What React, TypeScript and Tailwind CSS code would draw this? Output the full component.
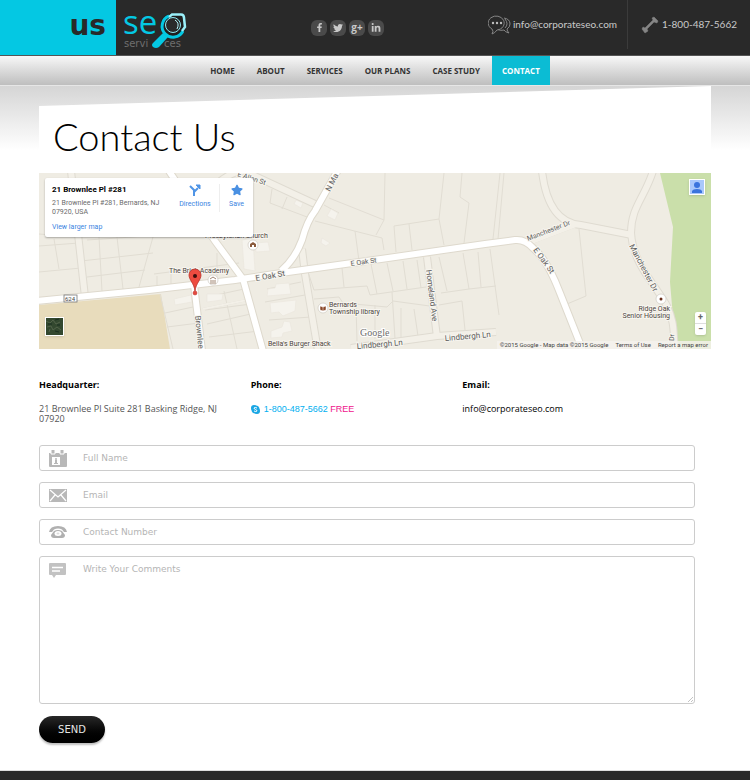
import React from 'react';
import { FaFacebookF, FaLinkedinIn, FaStar, FaTwitter } from 'react-icons/fa';

const navItems = ['HOME', 'ABOUT', 'SERVICES', 'OUR PLANS', 'CASE STUDY', 'CONTACT'];

const streetLabels = [
    { text: 'E Allen St', x: 198, y: 3, angle: 18, size: 7 },
    { text: 'N Ma', x: 291, y: 19, angle: -63, size: 8 },
    { text: 'E Oak St', x: 217, y: 108, angle: -10, size: 8 },
    { text: 'E Oak St', x: 312, y: 93, angle: -8, size: 7 },
    { text: 'E Oak St', x: 494, y: 77, angle: 54, size: 8 },
    { text: 'Homeland Ave', x: 387, y: 97, angle: 83, size: 8 },
    { text: 'Brownlee', x: 156, y: 143, angle: 84, size: 8 },
    { text: 'Lindbergh Ln', x: 318, y: 176, angle: -5, size: 8 },
    { text: 'Lindbergh Ln', x: 406, y: 168, angle: -5, size: 8 },
    { text: 'Manchester Dr', x: 489, y: 68, angle: -21, size: 7 },
    { text: 'Manchester Dr', x: 590, y: 73, angle: 62, size: 8 },
    { text: 'Dr', x: 635, y: 168, angle: -88, size: 7 },
];

const Logo: React.FC = () => (
    <svg className="h-[56px] w-[72px] shrink-0" viewBox="0 0 72 56" aria-label="SEO Services">
        <text x="7" y="34" fontSize="33" fill="#04c8e3" className="font-['Open_Sans',sans-serif]">se</text>
        <text x="8" y="47" fontSize="10" fill="#6f6f6f" className="font-['DejaVu_Sans',sans-serif]">servi</text>
        <text x="48" y="47" fontSize="10" fill="#6f6f6f" className="font-['DejaVu_Sans',sans-serif]">ces</text>
        <circle cx="57" cy="26" r="13" fill="#1f1f1f" />
        <path d="M53 16 A11 11 0 1 0 67 31" fill="none" stroke="#04c8e3" strokeWidth="3" />
        <path d="M47 33 L52 37 L43 47 Q40 49 37 47 Q35 45 37 43 Z" fill="#04c8e3" />
        <path d="M53 17 L56 14.500 H65 Q68 14.500 68 18 L69 27 L66 31" fill="none" stroke="#9bf0fa" strokeWidth="2.500" />
        <circle cx="57" cy="25" r="7.500" fill="#2a2a2a" stroke="#8eeaf5" strokeWidth="1" />
        <path d="M59 20 Q64 23 61 29" fill="none" stroke="#b9f7fc" strokeWidth="1" />
    </svg>
);

const ChatIcon: React.FC = () => (
    <svg className="h-5 w-[23px]" viewBox="0 0 23 20" fill="none" stroke="#858585" strokeWidth="1">
        <path d="M4 14 A8 7 0 1 1 9 15 Q7 18 4 19 Q6 16 4 14 Z" />
        <path d="M16 3 Q22 4 22 9 Q22 12 19 14 Q19 16 21 18 Q17 17 16 15 Q12 16 10 14.500" />
        <path d="M17 4 Q21 9 17 13" />
        <g fill="#bdbdbd" stroke="none">
            <circle cx="5" cy="8" r="1.200" />
            <circle cx="9" cy="8" r="1.200" />
            <circle cx="13" cy="8" r="1.200" />
        </g>
    </svg>
);

const HandsetIcon: React.FC = () => (
    <svg className="h-[18px] w-[18px]" viewBox="0 0 18 18" fill="#858585">
        <path d="M11 2 L13 1 L17 5 L16 7 L13 6 L6 13 L7 15 L4 17 L1 13 L2 11 L4 12 L12 4 Z" stroke="#858585" strokeWidth=".5" />
    </svg>
);

const CalendarIcon: React.FC = () => (
    <svg className="h-[17px] w-[18px]" viewBox="0 0 18 17" fill="#b8b8b8">
        <path d="M0 3 H18 V16 Q18 17 17 17 H1 Q0 17 0 16 Z" />
        <path d="M2 0 V4 H6 V0 M11 0 V4 H15 V0" fill="#b8b8b8" stroke="#fff" strokeWidth="1" />
        <rect x="3" y="7" width="8" height="8" fill="#fff" />
        <circle cx="7" cy="9" r="1" />
        <path d="M6 10 H8 V13 H9 V14 H5 V13 H6 Z" />
    </svg>
);

const MailIcon: React.FC = () => (
    <svg className="h-[13px] w-[18px]" viewBox="0 0 18 13">
        <rect width="18" height="13" fill="#b8b8b8" />
        <path d="M1 1 L9 8 L17 1 M1 12 L6 6 M17 12 L12 6" fill="none" stroke="#fff" strokeWidth="1.200" />
    </svg>
);

const PhoneIcon: React.FC = () => (
    <svg className="h-[13px] w-[18px]" viewBox="0 0 18 13" fill="#b0b0b0">
        <path d="M0 6 Q1 0 9 0 Q17 0 18 6 L15 6 L13 3.500 Q9 1.500 5 3.500 L3 6 Z" />
        <path d="M5 5 Q9 3 13 5 L16 9 Q16 12 13 12 H5 Q2 12 2 9 Z" />
        <ellipse cx="9" cy="7.500" rx="3.500" ry="2.500" fill="#fff" />
        <ellipse cx="9" cy="7.500" rx="1.500" ry="1" fill="#dddddd" />
    </svg>
);

const CommentIcon: React.FC = () => (
    <svg className="h-[15px] w-[17px]" viewBox="0 0 17 15" fill="#c2c2c2">
        <path d="M1 0 H16 Q17 0 17 1 V11 Q17 12 16 12 H7 L5 15 L3 12 H1 Q0 12 0 11 V1 Q0 0 1 0 Z" />
        <path d="M3 4.500 H14 M3 8 H11" stroke="#fff" strokeWidth="1.500" />
    </svg>
);

const Poi: React.FC<{ x: number; y: number; children?: React.ReactNode }> = ({ x, y, children }) => (
    <g transform={`translate(${x} ${y})`}>
        <circle r="5" fill="#fff" stroke="#cfcac2" strokeWidth=".7" />
        {children}
    </g>
);

const MapDrawing: React.FC = () => (
    <svg
        className="block h-full w-full font-['Roboto',sans-serif]"
        viewBox="0 0 672 176"
        preserveAspectRatio="xMidYMid slice"
        role="img"
        aria-label="Map of 21 Brownlee Pl"
    >
        <rect width="672" height="176" fill="#efece3" />
        <path d="M0 132 L122 121 L131 176 H0 Z" fill="#e8dcbc" />
        <path d="M621 0 L634 54 L631 109 L636 168 V176 H672 V0 Z" fill="#cadfaa" />

        {/* lot lines */}
        <g fill="none" stroke="#e1ddd3" strokeWidth="1">
            <path d="M0 61 L38 64 M0 73 L40 70 M15 66 L20 96 M0 99 L42 95 M42 88 L114 80 M48 104 L106 97 M60 64 L63 118 M78 64 L84 116 M114 64 L100 114 M48 67 L109 63" />
            <path d="M115 101 L200 90 M118 103 V116 M132 99 V114 M160 95 V108 M178 80 V104 M121 121 L134 176 M126 140 L154 134 M128 154 L160 150 M168 124 L205 116 M166 137 L212 131 M168 151 L216 140 M170 164 L220 158 M185 118 L198 176" />
            <path d="M233 16 L231 30 L268 44 M243 36 L248 24 M276 48 L343 65 L345 77 M316 58 L320 88 M290 25 L345 47 L337 62 M285 32 L300 40 M346 0 L345 47 M355 53 L400 46 L405 0 M355 53 L357 79 M370 51 L373 77 M400 46 L405 72 M423 0 L421 24 L430 30 L425 70" />
            <path d="M269 99 L275 117 L328 113 L331 122 L387 114 M303 95 L305 114 M332 91 L338 121 M348 90 L354 118 M364 88 L368 116 M378 87 L382 115 M275 126 L300 124 L304 130 L348 134 L354 128 L398 134 M317 132 L318 168 M336 132 V166 M353 119 L356 166 M362 135 V164 M375 136 L379 163 M400 84 L408 118 M424 80 L430 116 L457 113 M402 120 L430 116 M400 132 L423 128 L426 157 M451 76 L460 142 M439 79 L442 114" />
            <path d="M461 0 L454 66 M465 0 L459 66 M540 56 L547 123 L528 131 M228 116 L262 109 M226 129 L266 122 M230 147 L272 144" />
        </g>
        <g fill="#f5f3ed" stroke="#ebe7de" strokeWidth=".7">
            <path d="M229 116 L236 115 L237 111 L250 110 L252 121 L228 123 Z M231 130 L257 127 L256 138 L244 143 L240 139 L232 140 Z M232 158 L243 154 L245 148 L251 149 L253 158 L244 160 L243 164 L232 165 Z" />
            <path d="M257 27 L264 30 L262 35 L255 31 Z M292 36 L299 40 L296 47 L288 43 Z M283 65 L291 70 L287 73 L282 70 Z M216 70 L229 69 L231 78 L217 79 Z M203 67 L214 65 L216 98 L205 96 Z M168 121 L184 121 L183 127 L168 129 Z M135 126 L152 122 L153 129 L136 132 Z" />
        </g>

        {/* minor roads: casing first, then fill */}
        {[['#dfdbd1', 8], ['#f3f0e8', 6]].map(([color, width]) => (
            <g key={color} fill="none" stroke={color} strokeWidth={width}>
                <path d="M32 -2 L46 124" />
                <path d="M170 18 Q190 -2 205 -2 L276 31" />
                <path d="M263 76 L266 101 L279 178" />
                <path d="M388 84 L398 164" />
                <path d="M312 175 L398 163 L457 159" />
                <path d="M503 -2 C506 24 515 50 542 52 L593 62" />
                <path d="M614 -2 C606 24 592 34 592 60 C594 92 617 112 628 133 C636 150 634 158 636 178" />
                <path d="M536 52 L489 70" strokeWidth="5" />
                <path d="M164 136 L208 127" strokeWidth="2" />
            </g>
        ))}

        {/* main roads */}
        {[['#ded9cd', 8], ['#ffffff', 6]].map(([color, width]) => (
            <g key={color} fill="none" stroke={color} strokeWidth={width}>
                <path d="M130 -2 L176 68 L204 106 L224 178" />
                <path d="M155 112 L163 178" />
                <path d="M299 -3 L276 38 Q268 48 263 67 Q256 86 242 98" />
                <path d="M-2 128 L110 117 L196 107 L249 99 L349 85 L446 71 L476 67 Q486 66 494 75 Q508 86 521 120 L544 178" />
            </g>
        ))}

        <g fill="#5c5c5c" stroke="#f7f5ef" strokeWidth="2" paintOrder="stroke">
            {streetLabels.map((label, i) => (
                <text key={i} fontSize={label.size} transform={`translate(${label.x} ${label.y}) rotate(${label.angle})`}>
                    {label.text}
                </text>
            ))}
        </g>
        <g fill="#4e463f" stroke="#f7f5ef" strokeWidth="2" paintOrder="stroke" fontSize="7">
            <text x="166" y="65">Presbyterian Church</text>
            <text x="130" y="100">The Brick Academy</text>
            <text x="290" y="134">Bernards</text>
            <text x="290" y="141">Township library</text>
            <text x="229" y="173">Bella's Burger Shack</text>
            <text x="631" y="138" textAnchor="end">Ridge Oak</text>
            <text x="631" y="145" textAnchor="end">Senior Housing</text>
        </g>

        <Poi x={214} y={72}><path d="M-3 2 V-1 L0 -3 L3 -1 V2 H1 V0 H-1 V2 Z" fill="#8a5a3c" /></Poi>
        <Poi x={174} y={107}><path d="M-3 -1 L0 -3 L3 -1 M-2 0 V2 M0 0 V2 M2 0 V2 M-3 3 H3" fill="none" stroke="#8a6a52" strokeWidth=".8" /></Poi>
        <Poi x={284} y={135}><path d="M-3 -2 L0 -1 L3 -2 V2 L0 3 L-3 2 Z M0 -1 V3" fill="#8b4a2b" stroke="#fff" strokeWidth=".5" /></Poi>
        <Poi x={622} y={126}><circle r="1.500" fill="#6b2f1c" /></Poi>

        <rect x="25" y="122" width="13" height="7" fill="#fff" stroke="#777" strokeWidth=".8" />
        <text x="31" y="128" fontSize="6" textAnchor="middle" fill="#444">624</text>

        {/* location pin */}
        <path d="M156 118 C155 110 150 107 150 102 A6 6 0 0 1 162 102 C162 107 157 110 156 118 Z" fill="#ee4b40" stroke="#b93229" strokeWidth=".8" />
        <circle cx="156" cy="103" r="2" fill="#3d0f0c" />
        <circle cx="156" cy="120" r="2" fill="#e5483e" stroke="#b93229" strokeWidth=".5" />

        <text x="321" y="163" fontSize="10" fill="#6b6b6b" stroke="#fff" strokeWidth="2" paintOrder="stroke" className="font-['Liberation_Serif',serif]">Google</text>
    </svg>
);

const MapCard: React.FC = () => (
    <div className="absolute left-[6px] top-[5px] flex w-[208px] rounded-xs bg-white pb-[5px] pl-[7px] pt-[6px] text-[7px] leading-[9px] text-[#6b6b6b] shadow-[0_1px_2px_rgba(0,0,0,0.3)]">
        <div className="w-[119px] shrink-0">
            <p className="mb-1 text-[8px] font-bold leading-[11px] text-black">21 Brownlee Pl #281</p>
            <p>21 Brownlee Pl #281, Bernards, NJ 07920, USA</p>
            <a href="#map" className="mt-[6px] block text-[#3a84df]">View larger map</a>
        </div>
        <a href="#directions" className="flex w-12 shrink-0 flex-col items-center gap-1 text-[#3a84df]">
            <svg className="h-3 w-3" viewBox="0 0 12 12" fill="none" stroke="#5095e6" strokeWidth="2">
                <path d="M1 2 L5 6 V12 M5 8 L9 4" />
                <path d="M7 1 H11 V5 Z" fill="#5095e6" strokeWidth="1" />
            </svg>
            Directions
        </a>
        <a href="#save" className="flex h-7 w-[34px] shrink-0 flex-col items-center gap-1 border-l border-[#eeeeee] text-[#3a84df]">
            <FaStar className="h-3 w-3 shrink-0 text-[#4a90e2]" />
            Save
        </a>
    </div>
);

const ContactMap: React.FC = () => (
    <div className="relative h-[176px] overflow-hidden font-['Roboto',sans-serif]">
        <MapDrawing />
        <MapCard />
        <button aria-label="Sign in" className="absolute right-[6px] top-[6px] h-4 w-4 border border-white bg-[#a9c8fb] shadow">
            <svg viewBox="0 0 14 14" fill="#3a74dd">
                <circle cx="7" cy="5" r="3" />
                <path d="M2 13 V11 Q3 9 7 9 Q11 9 12 11 V13 Z" />
            </svg>
        </button>
        <button aria-label="Satellite view" className="absolute bottom-[13px] left-[6px] h-[19px] w-[19px] border border-white bg-[#33482f] shadow">
            <svg viewBox="0 0 17 17" stroke="#52634a" fill="none">
                <path d="M0 3 L4 5 L7 2 L10 6 L14 4 M1 9 L5 8 L7 12 L11 9 L15 12 M3 14 L4 11" />
                <path d="M2 6 L6 6 M9 2 L13 1 M9 13 L13 14 M11 7 H14" stroke="#182d20" />
            </svg>
        </button>
        <div className="absolute bottom-[14px] right-[5px] flex w-[11px] flex-col rounded-xs bg-white text-center text-[9px] font-bold leading-[11px] text-[#666666] shadow">
            <button aria-label="Zoom in">+</button>
            <button aria-label="Zoom out" className="border-t border-[#dddddd]">−</button>
        </div>
        <div className="absolute bottom-0 right-0 flex gap-[7px] bg-[#f5f3ee]/80 px-[3px] text-[6px] leading-[8px] text-[#444444]">
            <span>©2015 Google - Map data ©2015 Google</span>
            <a href="#terms">Terms of Use</a>
            <a href="#report">Report a map error</a>
        </div>
    </div>
);

const Header: React.FC = () => (
    <header className="flex h-[56px] border-b border-[#555555] bg-[#292929] text-[#c9c9c9]">
        <a href="#home" className="flex h-[55px] shrink-0">
            <span className="flex w-[116px] items-center justify-end bg-[#04c8e3] pb-1 pr-[10px] font-['DejaVu_Sans',sans-serif] text-[28px] font-bold leading-none text-[#292929]">
                us
            </span>
            <Logo />
        </a>
        <div className="flex flex-1 items-center gap-[3px] pl-[123px]">
            <a href="#facebook" aria-label="Facebook" className="flex h-4 w-4 items-center justify-center rounded-[6px] bg-[#4a4a4a]"><FaFacebookF size={9} /></a>
            <a href="#twitter" aria-label="Twitter" className="flex h-4 w-4 items-center justify-center rounded-[6px] bg-[#4a4a4a]"><FaTwitter size={10} /></a>
            <a href="#google" aria-label="Google Plus" className="flex h-4 w-4 items-center justify-center rounded-[6px] bg-[#4a4a4a] pb-[2px] font-['Open_Sans',sans-serif] text-[10px] font-bold leading-none">g+</a>
            <a href="#linkedin" aria-label="LinkedIn" className="flex h-4 w-4 items-center justify-center rounded-[6px] bg-[#4a4a4a]"><FaLinkedinIn size={10} /></a>
        </div>
        <div className="flex shrink-0 pb-[6px] font-['Lato',sans-serif] text-[10px]">
            <a href="mailto:info@corporateseo.com" className="flex items-center gap-[2px] border-r border-[#3b3b3b] pr-[10px]">
                <ChatIcon />
                info@corporateseo.com
            </a>
            <a href="tel:18004875662" className="flex items-center gap-[3px] px-[13px]">
                <HandsetIcon />
                1-800-487-5662
            </a>
        </div>
    </header>
);

const Nav: React.FC = () => (
    <nav className="flex h-[30px] justify-center gap-[2px] border-b border-[#e6e6e6] bg-linear-to-b from-[#f8f8f8] to-[#bebebe] font-['Open_Sans',sans-serif] text-[8px] font-bold text-[#333333]">
        {navItems.map((item) => (
            <a
                key={item}
                href={`#${item.toLowerCase().replace(' ', '-')}`}
                className={item === 'CONTACT' ? 'flex items-center bg-[#0bbcd4] px-[10px] text-white' : 'flex items-center px-[10px]'}
            >
                {item}
            </a>
        ))}
    </nav>
);

const fields = [
    { id: 'name', label: 'Full Name', type: 'text', icon: <CalendarIcon /> },
    { id: 'email', label: 'Email', type: 'email', icon: <MailIcon /> },
    { id: 'phone', label: 'Contact Number', type: 'tel', icon: <PhoneIcon /> },
];

const ContactForm: React.FC = () => (
    <form className="mr-4 flex flex-col gap-[11px] font-['DejaVu_Sans',sans-serif] text-[9px]" onSubmit={(e) => e.preventDefault()}>
        {fields.map((field) => (
            <div key={field.id} className="flex h-[26px] items-center rounded-[3px] border border-[#cccccc] bg-white pl-[9px]">
                <label htmlFor={field.id} aria-label={field.label} className="w-[34px]">{field.icon}</label>
                <input id={field.id} type={field.type} placeholder={field.label} className="h-full flex-1 outline-none placeholder:text-[#b5b5b5]" />
            </div>
        ))}
        <div className="relative flex h-[148px] rounded-[3px] border border-[#cccccc] bg-white pl-[9px]">
            <label htmlFor="comments" aria-label="Write Your Comments" className="w-[34px] pt-[6px]"><CommentIcon /></label>
            <textarea id="comments" placeholder="Write Your Comments" className="flex-1 resize-none pt-[6px] outline-none placeholder:text-[#b5b5b5]" />
            <svg className="absolute bottom-px right-px h-[6px] w-[6px]" viewBox="0 0 6 6" stroke="#c4c4c4" fill="none">
                <path d="M1 6 L6 1 M4 6 L6 4" />
            </svg>
        </div>
        <button className="mt-px h-[27px] w-[66px] self-start rounded-full bg-linear-to-b from-[#292929] to-black text-[10px] text-[#e5e5e5] shadow-[0_2px_2px_rgba(0,0,0,0.25)]">
            SEND
        </button>
    </form>
);

const App: React.FC = () => {
    return (
        <div className="bg-white">
            <Header />
            <Nav />
            <main className="bg-[linear-gradient(#d5d5d5,#ffffff_64px)] px-[39px]">
                <div className="bg-white pb-[27px] [clip-path:polygon(0_20px,100%_0,100%_100%,0_100%)]">
                    <h1 className="px-[14px] pb-[15px] pt-[28px] font-['Lato',sans-serif] text-[38px] font-light leading-[44px] text-black">Contact Us</h1>
                    <ContactMap />
                    <div className="grid grid-cols-3 pb-[21px] pr-[37px] pt-[31px] font-['Open_Sans',sans-serif] text-[9px] leading-[10px] text-[#555555]">
                        <div className="pr-6">
                            <h2 className="mb-[14px] font-bold text-black">Headquarter:</h2>
                            <p>21 Brownlee Pl Suite 281 Basking Ridge, NJ 07920</p>
                        </div>
                        <div>
                            <h2 className="mb-[14px] font-bold text-black">Phone:</h2>
                            <a href="tel:18004875662" className="flex items-center gap-1 font-['Liberation_Sans',sans-serif] text-[#00aff0]">
                                <svg className="h-[9px] w-[9px]" viewBox="0 0 9 9" fill="#1ba7e4">
                                    <circle cx="3" cy="3" r="3" />
                                    <circle cx="6" cy="6" r="3" />
                                    <circle cx="4.500" cy="4.500" r="4" />
                                    <path d="M6 3 Q4 2 3 3 Q3 4 4.500 4.500 Q6 5 6 6 Q5 7 3 6" fill="none" stroke="#fff" />
                                </svg>
                                <span>1-800-487-5662 <span className="text-[#f0148c]">FREE</span></span>
                            </a>
                        </div>
                        <div>
                            <h2 className="mb-[14px] font-bold text-black">Email:</h2>
                            <a href="mailto:info@corporateseo.com" className="text-black">info@corporateseo.com</a>
                        </div>
                    </div>
                    <ContactForm />
                </div>
            </main>
            <footer className="h-[10px] border-t border-[#dddddd] bg-[#292929]" />
        </div>
    );
};

export default App;
